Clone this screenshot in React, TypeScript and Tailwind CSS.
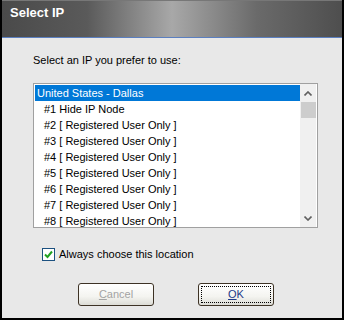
import React from "react";

const rows = [
  "#1 Hide IP Node",
  "#2 [ Registered User Only ]",
  "#3 [ Registered User Only ]",
  "#4 [ Registered User Only ]",
  "#5 [ Registered User Only ]",
  "#6 [ Registered User Only ]",
  "#7 [ Registered User Only ]",
  "#8 [ Registered User Only ]",
];

const Chevron = ({ down }: { down?: boolean }) => (
  <svg width="8" height="5" viewBox="0 0 8 5" className={down ? "rotate-180" : ""}>
    <path d="M0.5 4.5 L4 1 L7.5 4.5" fill="none" stroke="#606060" strokeWidth="1.6" />
  </svg>
);

export default function App() {
  return (
    <div
      className="w-[344px] h-[320px] flex flex-col border-x-2 border-b-2 border-black bg-[#e8e8e8] overflow-hidden"
      style={{ fontFamily: '"Liberation Sans", Arial, sans-serif' }}
    >
      {/* title bar */}
      <div className="h-[37px] shrink-0 flex items-start pt-[4px] pl-[8px] border-t border-[#777] bg-[linear-gradient(90deg,#4a4a4a_0%,#5a5a5a_25%,#a8a8a8_50%,#6a6a6a_75%,#4e4e4e_100%)]">
        <span className="text-white text-[13px] leading-[16px] font-bold">Select IP</span>
      </div>
      <div className="h-px shrink-0 bg-[#5b7fc0]" />

      <div className="flex flex-col pl-[31px] pr-[24px] pt-[14px] text-[11px] text-black">
        <div className="leading-[16px]">Select an IP you prefer to use:</div>

        {/* listbox */}
        <div className="mt-[15px] h-[145px] flex border border-[#a0a0a0] bg-white">
          <div className="flex-1 pl-px pt-px overflow-hidden">
            <div className="h-[16px] leading-[16px] bg-[#0078d7] text-white pl-[2px]">
              United States - Dallas
            </div>
            {rows.map((r) => (
              <div key={r} className="h-[16px] leading-[16px] pl-[9px] whitespace-nowrap">
                {r}
              </div>
            ))}
          </div>
          <div className="w-[16px] bg-[#f0f0f0] flex flex-col items-center mr-px">
            <div className="h-[18px] w-full flex items-center justify-center">
              <Chevron />
            </div>
            <div className="h-[16px] w-[15px] bg-[#cdcdcd]" />
            <div className="flex-1" />
            <div className="h-[18px] w-full flex items-center justify-center">
              <Chevron down />
            </div>
          </div>
        </div>

        {/* checkbox */}
        <div className="mt-[19px] ml-[9px] flex items-center gap-[4px]">
          <div className="w-[13px] h-[13px] border border-[#1c5180] bg-white flex items-center justify-center">
            <svg width="9" height="9" viewBox="0 0 9 9">
              <path d="M1 4.5 L3.5 7 L8 1.5" fill="none" stroke="#21a121" strokeWidth="2" />
            </svg>
          </div>
          <span className="leading-[14px]">Always choose this location</span>
        </div>

        {/* buttons */}
        <div className="mt-[22px] ml-[45px] flex gap-[44px]">
          <button className="w-[76px] h-[23px] rounded-[3px] border border-[#3d3225] bg-[linear-gradient(180deg,#ffffff_0%,#f4f4f0_60%,#dcdcd6_100%)] text-[11px] text-[#a3a3a3] flex items-center justify-center">
            <span>
              <span className="underline">C</span>ancel
            </span>
          </button>
          <button className="w-[76px] h-[23px] rounded-[3px] border border-[#3d3225] bg-[linear-gradient(180deg,#ffffff_0%,#f4f4f0_60%,#dcdcd6_100%)] text-[11px] text-[#1d3a8a] p-[2px]">
            <span className="w-full h-full border border-dotted border-black flex items-center justify-center">
              <span>
                <span className="underline">O</span>K
              </span>
            </span>
          </button>
        </div>
      </div>
    </div>
  );
}
